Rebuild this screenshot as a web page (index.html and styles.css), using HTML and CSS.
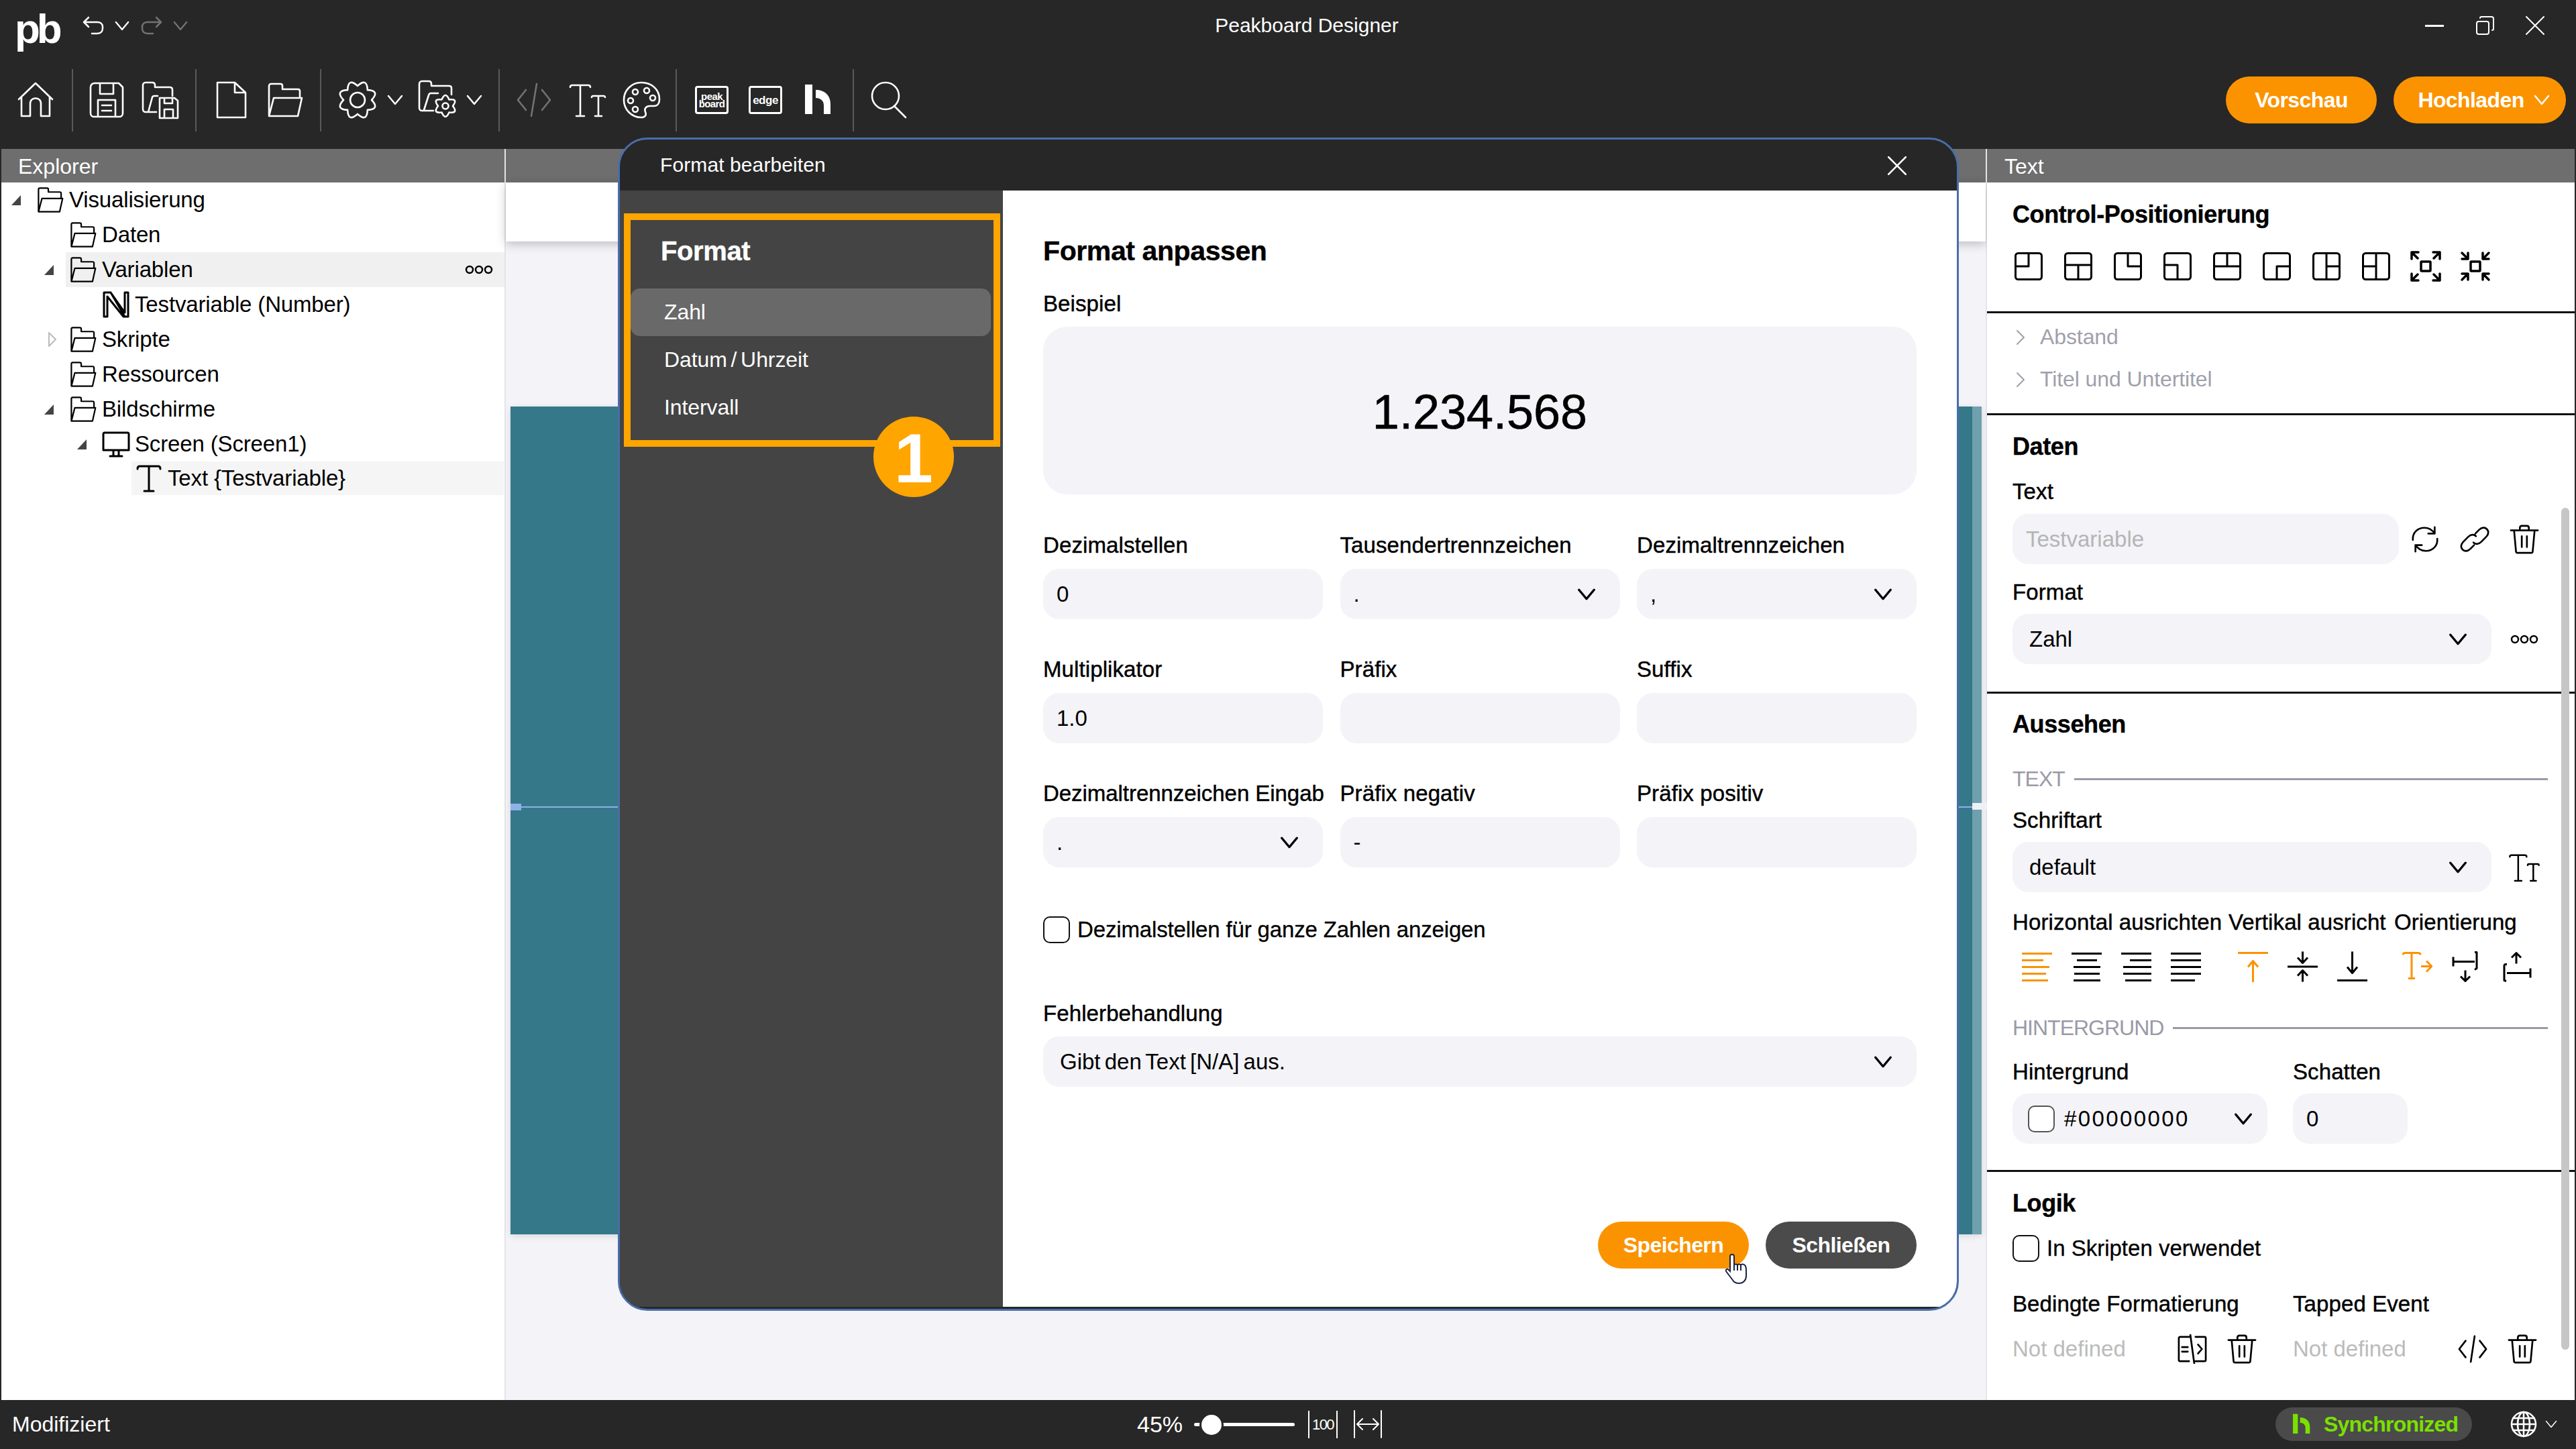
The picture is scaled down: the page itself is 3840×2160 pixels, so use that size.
FILE: index.html
```html
<!DOCTYPE html>
<html lang="de">
<head>
<meta charset="utf-8">
<title>Peakboard Designer</title>
<link rel="stylesheet" href="styles.css">
</head>
<body>
<svg class="defs" width="0" height="0">
  <defs>
    <symbol id="i-chev" viewBox="0 0 24 16"><path d="M2 2 12 14 22 2"/></symbol>
    <symbol id="i-home" viewBox="0 0 60 60"><path d="M5 29 30 5l25 24M9 26v28h13V35c0-10 16-10 16 0v19h13V26"/></symbol>
    <symbol id="i-save" viewBox="0 0 60 60"><path d="M12 5h36l6 6v39a5 5 0 0 1-5 5H11a5 5 0 0 1-5-5V11a6 6 0 0 1 6-6zM20 5v16h20V5M17 55V30h26v25M23 38h14M23 46h14"/></symbol>
    <symbol id="i-savefolder" viewBox="0 0 60 60"><path d="M24 48H8a4 4 0 0 1-4-4V8a4 4 0 0 1 4-4h10c3 0 4 2 4 4v3h22c3 0 4 2 4 4v9M12 48l6-22c.5-1.500 1-2 3-2h5"/><path d="M29 27h22l5 4v26H29zM36 27v8h12v-8M36 57V44h13v13"/></symbol>
    <symbol id="i-doc" viewBox="0 0 60 60"><path d="M9 4h26l16 15v37H9zM35 4v15h16"/></symbol>
    <symbol id="i-folder" viewBox="0 0 60 60"><path d="M6 54V9a3 3 0 0 1 3-3h14c2 0 3 1 3 3v5h23c2 0 3 1 3 3v10M6 54l7-27h42l-6 27z"/></symbol>
    <symbol id="i-gear" viewBox="0 0 60 60"><path d="M30 9Q44-3.800 44.850 15.150 63.800 16 51 30 63.800 44 44.850 44.850 44 63.800 30 51 16 63.800 15.150 44.850-3.800 44 9 30-3.800 16 15.150 15.150 16-3.800 30 9z"/><circle cx="30" cy="30" r="11"/></symbol>
    <symbol id="i-gearfolder" viewBox="0 0 60 60"><path d="M25 46H8a4 4 0 0 1-4-4V6a4 4 0 0 1 4-4h10c3 0 4 2 4 4v3h26c2 0 4 1 4 3v10M11 45l7-22c.5-2 1-3 3-3h11"/><path d="M48.500 29.500Q43 16.500 37.500 29.500 23.500 27.750 32 39 23.500 50.250 37.500 48.500 43 61.500 48.500 48.500 62.500 50.250 54 39 62.500 27.750 48.500 29.500z"/><circle cx="43" cy="39" r="4.500"/></symbol>
    <symbol id="i-code" viewBox="0 0 60 60"><path d="M18 15 6 30l12 15M42 15l12 15-12 15M34 6 26 54"/></symbol>
    <symbol id="i-tt" viewBox="0 0 60 60"><path d="M4 11c0-2 1-3 3-3h24c2 0 3 1 3 3M19 8v46M13 54h12M36 26c0-1 1-2 2-2h16c1 0 2 1 2 2M46 24v30M41 54h10"/></symbol>
    <symbol id="i-palette" viewBox="0 0 60 60"><path d="M30 4C15 4 4 16 4 30s11 26 26 26c6 0 8-4 6-8-2-5 1-9 7-9h6c5 0 8-4 8-10C57 14 45 4 30 4z"/><circle cx="21" cy="18" r="4"/><circle cx="38" cy="16" r="4"/><circle cx="14" cy="31" r="4"/><circle cx="47" cy="27" r="4"/><circle cx="21" cy="44" r="4"/></symbol>
    <symbol id="i-h" viewBox="0 0 60 60"><path class="solid" d="M9 7H20V51H9zM25 15C38 15 47 23 47 36V51H37V38C37 31 32 27 25 27z"/></symbol>
    <symbol id="i-search" viewBox="0 0 60 60"><circle cx="25" cy="24" r="20"/><path d="M38 39 55 56"/></symbol>
    <symbol id="i-dots" viewBox="0 0 42 14"><circle cx="7" cy="7" r="5"/><circle cx="21" cy="7" r="5"/><circle cx="35" cy="7" r="5"/></symbol>
    <symbol id="i-n" viewBox="0 0 44 44"><path d="M9 4h5l21 30V4h5v36h-7L9 10v30H4V4zM14 4l21 36"/></symbol>
    <symbol id="i-screen" viewBox="0 0 44 44"><path d="M5 5h34a2 2 0 0 1 2 2v24H3V7a2 2 0 0 1 2-2zM18 31v9M26 31v9M13 40h18"/></symbol>
    <symbol id="i-t" viewBox="0 0 44 44"><path d="M5 8c0-3 1-4 3-4h28c2 0 3 1 3 4M22 4v37M15 41h14"/></symbol>
    <symbol id="p1" viewBox="0 0 42 42"><rect x="1.500" y="1.500" width="39" height="39" rx="4"/><path d="M21 2v19H2"/></symbol>
    <symbol id="p2" viewBox="0 0 42 42"><rect x="1.500" y="1.500" width="39" height="39" rx="4"/><path d="M2 19h38M21 19v21"/></symbol>
    <symbol id="p3" viewBox="0 0 42 42"><rect x="1.500" y="1.500" width="39" height="39" rx="4"/><path d="M21 2v19h19"/></symbol>
    <symbol id="p4" viewBox="0 0 42 42"><rect x="1.500" y="1.500" width="39" height="39" rx="4"/><path d="M2 19h19v21"/></symbol>
    <symbol id="p5" viewBox="0 0 42 42"><rect x="1.500" y="1.500" width="39" height="39" rx="4"/><path d="M21 2v19M2 21h38"/></symbol>
    <symbol id="p6" viewBox="0 0 42 42"><rect x="1.500" y="1.500" width="39" height="39" rx="4"/><path d="M40 21H21v19"/></symbol>
    <symbol id="p7" viewBox="0 0 42 42"><rect x="1.500" y="1.500" width="39" height="39" rx="4"/><path d="M21 2v38M21 21h19"/></symbol>
    <symbol id="p8" viewBox="0 0 42 42"><rect x="1.500" y="1.500" width="39" height="39" rx="4"/><path d="M21 2v38M2 21h19"/></symbol>
    <symbol id="p9" viewBox="0 0 46 46"><rect x="16" y="16" width="14" height="14" rx="1"/><path d="M2 12V2h10M2 2l9 9M34 2h10v10M44 2l-9 9M2 34v10h10M2 44l9-9M44 34v10H34M44 44l-9-9"/></symbol>
    <symbol id="p10" viewBox="0 0 46 46"><rect x="16" y="16" width="14" height="14" rx="1"/><path d="M3 12h9V3M3 3l9 9M43 12h-9V3M43 3l-9 9M3 34h9v9M3 43l9-9M43 34h-9v9M43 43l-9-9"/></symbol>
    <symbol id="i-refresh" viewBox="0 0 46 46"><path d="M4 24C3 13 11 5 22 5c7 0 12 3 16 9M42 22c1 11-7 19-18 19-7 0-12-3-16-9M38 4v10H28M8 42V32h10"/></symbol>
    <symbol id="i-link" viewBox="0 0 46 46"><path d="M22 32l-6 6c-4 4-9 4-12 1s-3-8 1-12l8-8c4-4 9-4 12-1M24 14l6-6c4-4 9-4 12-1s3 8-1 12l-8 8c-4 4-9 4-12 1"/></symbol>
    <symbol id="i-trash" viewBox="0 0 46 46"><path d="M2 9h42M7 9l3 33c0 1 1 2 2 2h22c1 0 2-1 2-2l3-33M16 9V5c0-2 1-3 3-3h8c2 0 3 1 3 3v4M19 18v17M27 18v17"/></symbol>
    <symbol id="i-cond" viewBox="0 0 46 46"><path d="M18 4H4a2 2 0 0 0-2 2v34a2 2 0 0 0 2 2h14M28 4h14a2 2 0 0 1 2 2v34a2 2 0 0 1-2 2H28M20 1l6 44M7 20h9M7 27h9M32 16l6 7-6 7"/></symbol>
    <symbol id="i-code2" viewBox="0 0 46 46"><path d="M12 10 2 23l10 13M34 10l10 13-10 13M26 3 20 43"/></symbol>
    <symbol id="al-l" viewBox="0 0 45 45"><path d="M0 3h45M0 13h32M0 23h41M0 33h36M0 43h39"/></symbol>
    <symbol id="al-c" viewBox="0 0 45 45"><path d="M0 3h45M8 13h30M3 23h40M4 33h38M3 43h40"/></symbol>
    <symbol id="al-r" viewBox="0 0 45 45"><path d="M0 3h45M13 13h32M3 23h42M3 33h42M6 43h39"/></symbol>
    <symbol id="al-j" viewBox="0 0 45 45"><path d="M0 3h45M0 13h45M0 23h45M0 33h45M0 43h36"/></symbol>
    <symbol id="va-t" viewBox="0 0 45 45"><path class="thick" d="M0 2h45"/><path d="M22.500 46V14M15 23l7.500-9L30 23"/></symbol>
    <symbol id="va-m" viewBox="0 0 45 45"><path class="thick" d="M0 22.500h45"/><path d="M22.500 0v16M15 9l7.500 8L30 9M22.500 45V29M15 36l7.500-8L30 36"/></symbol>
    <symbol id="va-b" viewBox="0 0 45 45"><path class="thick" d="M0 43h45"/><path d="M22.500 0v32M15 23l7.500 9L30 23"/></symbol>
    <symbol id="or-a" viewBox="0 0 45 45"><path d="M1 5c0-2 1-3 3-3h20c2 0 3 1 3 3M14 2v38M9 40h10M28 22h15M36 14l8 8-8 8"/></symbol>
    <symbol id="or-b" viewBox="0 0 45 45"><path d="M2 14v-1M2 8v14M2 15h32M34 1h3v24l-3 2M20 28v16M13 37l7 7 7-7"/></symbol>
    <symbol id="or-c" viewBox="0 0 45 45"><path d="M43 25v14M8 32h35M8 19H6c-1 0-2 1-2 2v22l3 1M22 18V2M15 9l7-7 7 7"/></symbol>
    <symbol id="i-globe" viewBox="0 0 40 40"><circle cx="20" cy="20" r="18"/><ellipse cx="20" cy="20" rx="9" ry="18"/><path d="M20 2v36M4 11h32M2 20h36M4 29h32"/></symbol>
    <symbol id="i-fit" viewBox="0 0 44 42"><path d="M2 1v40M42 1v40M7 21h30M14 13l-8 8 8 8M30 13l8 8-8 8"/></symbol>
    <symbol id="i-x" viewBox="0 0 28 28"><path d="M1 1 27 27M27 1 1 27"/></symbol>
    <symbol id="i-restore" viewBox="0 0 28 28"><rect x="2" y="8" width="18" height="19" rx="3"/><path d="M7 3c0-1 1-2 2-2h15c2 0 3 1 3 3v15c0 1-1 2-2 2"/></symbol>
    <symbol id="i-undo" viewBox="0 0 32 28"><path d="M2 9h20c5 0 8 3 8 7v2c0 5-3 8-8 8h-8M9 2 2 9l7 7"/></symbol>
    <symbol id="i-redo" viewBox="0 0 32 28"><path d="M30 9H10c-5 0-8 3-8 7v2c0 5 3 8 8 8h8M23 2l7 7-7 7"/></symbol>
    <symbol id="i-tri-open" viewBox="0 0 12 22"><path d="M1 1l10 10L1 21z"/></symbol>
  </defs>
</svg>

<div class="app">
  <header class="titlebar">
    <div class="title-left">
      <span class="logo">pb</span>
      <svg class="ico undo"><use href="#i-undo"/></svg>
      <svg class="ico chev-s"><use href="#i-chev"/></svg>
      <svg class="ico undo dim"><use href="#i-redo"/></svg>
      <svg class="ico chev-s dim"><use href="#i-chev"/></svg>
    </div>
    <div class="app-title">Peakboard Designer</div>
    <div class="win-controls">
      <span class="win-min"></span>
      <svg class="ico win-btn"><use href="#i-restore"/></svg>
      <svg class="ico win-btn"><use href="#i-x"/></svg>
    </div>
  </header>

  <nav class="toolbar">
    <div class="tb-group g1"><svg class="ico tb"><use href="#i-home"/></svg></div>
    <div class="tb-group g2"><svg class="ico tb"><use href="#i-save"/></svg><svg class="ico tb"><use href="#i-savefolder"/></svg></div>
    <div class="tb-group g3"><svg class="ico tb"><use href="#i-doc"/></svg><svg class="ico tb"><use href="#i-folder"/></svg></div>
    <div class="tb-group g4"><svg class="ico tb"><use href="#i-gear"/></svg><svg class="ico tb-chev"><use href="#i-chev"/></svg><svg class="ico tb"><use href="#i-gearfolder"/></svg><svg class="ico tb-chev"><use href="#i-chev"/></svg></div>
    <div class="tb-group g5"><svg class="ico tb dim"><use href="#i-code"/></svg><svg class="ico tb"><use href="#i-tt"/></svg><svg class="ico tb"><use href="#i-palette"/></svg></div>
    <div class="tb-group g6">
      <span class="brand-box"><span>peak</span><span>board</span></span>
      <span class="brand-box"><span class="brand-edge">edge</span></span>
      <svg class="ico tb fill"><use href="#i-h"/></svg>
    </div>
    <svg class="ico tb tb-search"><use href="#i-search"/></svg>
    <div class="tb-actions">
      <button class="pill pill-orange">Vorschau</button>
      <button class="pill pill-orange pill-upload">Hochladen<svg class="ico pill-chev"><use href="#i-chev"/></svg></button>
    </div>
  </nav>

  <div class="workspace">
    <aside class="explorer">
      <div class="panel-head">Explorer</div>
      <ul class="tree">
        <li class="row l0"><span class="arrow"><i class="tri"></i></span><span class="node"><svg class="ico node-ico"><use href="#i-folder"/></svg>Visualisierung</span></li>
        <li class="row l1"><span class="arrow"></span><span class="node"><svg class="ico node-ico"><use href="#i-folder"/></svg>Daten</span></li>
        <li class="row l1"><span class="arrow"><i class="tri"></i></span><span class="node node-hover"><svg class="ico node-ico"><use href="#i-folder"/></svg>Variablen<svg class="ico node-dots"><use href="#i-dots"/></svg></span></li>
        <li class="row l2"><span class="arrow"></span><span class="node"><svg class="ico node-ico"><use href="#i-n"/></svg>Testvariable (Number)</span></li>
        <li class="row l1"><span class="arrow"><svg class="ico tri-open"><use href="#i-tri-open"/></svg></span><span class="node"><svg class="ico node-ico"><use href="#i-folder"/></svg>Skripte</span></li>
        <li class="row l1"><span class="arrow"></span><span class="node"><svg class="ico node-ico"><use href="#i-folder"/></svg>Ressourcen</span></li>
        <li class="row l1"><span class="arrow"><i class="tri"></i></span><span class="node"><svg class="ico node-ico"><use href="#i-folder"/></svg>Bildschirme</span></li>
        <li class="row l2"><span class="arrow"><i class="tri"></i></span><span class="node"><svg class="ico node-ico"><use href="#i-screen"/></svg>Screen (Screen1)</span></li>
        <li class="row l3"><span class="arrow"></span><span class="node node-sel"><svg class="ico node-ico"><use href="#i-t"/></svg>Text {Testvariable}</span></li>
      </ul>
    </aside>

    <main class="center">
      <div class="panel-head"></div>
      <div class="ruler"></div>
      <div class="stage">
        <div class="artboard">
          <span class="sel-line"></span>
          <span class="sel-handle"></span>
          <span class="sel-handle-r"></span>
        </div>
      </div>
    </main>

    <aside class="props">
      <div class="panel-head panel-head-r">Text</div>
      <span class="scrollbar"></span>
      <section class="sec sec-pos">
        <h3 class="sec-title">Control-Positionierung</h3>
        <div class="pos-icons">
          <svg class="ico pos"><use href="#p1"/></svg><svg class="ico pos"><use href="#p2"/></svg><svg class="ico pos"><use href="#p3"/></svg><svg class="ico pos"><use href="#p4"/></svg><svg class="ico pos"><use href="#p5"/></svg><svg class="ico pos"><use href="#p6"/></svg><svg class="ico pos"><use href="#p7"/></svg><svg class="ico pos"><use href="#p8"/></svg><svg class="ico pos pos-a"><use href="#p9"/></svg><svg class="ico pos pos-a"><use href="#p10"/></svg>
        </div>
      </section>
      <section class="sec sec-collapsed">
        <div class="coll"><svg class="ico coll-chev" viewBox="0 0 14 24"><path d="M2 2l10 10L2 22"/></svg>Abstand</div>
        <div class="coll"><svg class="ico coll-chev" viewBox="0 0 14 24"><path d="M2 2l10 10L2 22"/></svg>Titel und Untertitel</div>
      </section>
      <section class="sec sec-daten">
        <h3 class="sec-title">Daten</h3>
        <div class="lbl lbl-first">Text</div>
        <div class="ctl-row">
          <div class="ctl ctl-text ph">Testvariable</div>
          <svg class="ico act act-first"><use href="#i-refresh"/></svg>
          <svg class="ico act"><use href="#i-link"/></svg>
          <svg class="ico act"><use href="#i-trash"/></svg>
        </div>
        <div class="lbl lbl-next">Format</div>
        <div class="ctl-row">
          <div class="ctl ctl-wide">Zahl<svg class="ico ctl-chev"><use href="#i-chev"/></svg></div>
          <svg class="ico act-dots"><use href="#i-dots"/></svg>
        </div>
      </section>
      <section class="sec sec-look">
        <h3 class="sec-title">Aussehen</h3>
        <div class="legend legend-first">TEXT</div>
        <div class="lbl lbl-font">Schriftart</div>
        <div class="ctl-row">
          <div class="ctl ctl-wide">default<svg class="ico ctl-chev"><use href="#i-chev"/></svg></div>
          <svg class="ico font-ico"><use href="#i-tt"/></svg>
        </div>
        <div class="lbl-row">
          <span class="lbl lbl-h">Horizontal ausrichten</span>
          <span class="lbl lbl-v">Vertikal ausricht</span>
          <span class="lbl">Orientierung</span>
        </div>
        <div class="align-row">
          <svg class="ico alg on"><use href="#al-l"/></svg><svg class="ico alg"><use href="#al-c"/></svg><svg class="ico alg"><use href="#al-r"/></svg><svg class="ico alg"><use href="#al-j"/></svg>
          <svg class="ico alg on split"><use href="#va-t"/></svg><svg class="ico alg"><use href="#va-m"/></svg><svg class="ico alg"><use href="#va-b"/></svg>
          <svg class="ico alg on split2"><use href="#or-a"/></svg><svg class="ico alg"><use href="#or-b"/></svg><svg class="ico alg"><use href="#or-c"/></svg>
        </div>
        <div class="legend legend-bg">HINTERGRUND</div>
        <div class="bg-grid">
          <div>
            <div class="lbl">Hintergrund</div>
            <div class="ctl ctl-color"><span class="swatch"></span><span class="hex">#00000000</span><svg class="ico ctl-chev"><use href="#i-chev"/></svg></div>
          </div>
          <div>
            <div class="lbl">Schatten</div>
            <div class="ctl ctl-num">0</div>
          </div>
        </div>
      </section>
      <section class="sec sec-logic">
        <h3 class="sec-title">Logik</h3>
        <label class="check check-logic"><span class="box"></span>In Skripten verwendet</label>
        <div class="logic-grid">
          <div>
            <div class="lbl">Bedingte Formatierung</div>
            <div class="logic-row"><span class="nd">Not defined</span><svg class="ico act"><use href="#i-cond"/></svg><svg class="ico act"><use href="#i-trash"/></svg></div>
          </div>
          <div>
            <div class="lbl">Tapped Event</div>
            <div class="logic-row"><span class="nd">Not defined</span><svg class="ico act"><use href="#i-code2"/></svg><svg class="ico act"><use href="#i-trash"/></svg></div>
          </div>
        </div>
      </section>
    </aside>
  </div>

  <footer class="statusbar">
    <span class="st-left">Modifiziert</span>
    <div class="zoom">
      <span class="zoom-pct">45%</span>
      <span class="slider"><i class="thumb"></i></span>
      <span class="z100">100</span>
      <svg class="ico zfit"><use href="#i-fit"/></svg>
    </div>
    <div class="st-right">
      <span class="sync"><svg class="ico sync-h"><use href="#i-h"/></svg>Synchronized</span>
      <svg class="ico globe"><use href="#i-globe"/></svg>
      <svg class="ico globe-chev"><use href="#i-chev"/></svg>
    </div>
  </footer>

  <div class="dialog">
    <div class="dlg-title">Format bearbeiten<svg class="ico dlg-x"><use href="#i-x"/></svg></div>
    <div class="dlg-body">
      <div class="dlg-side">
        <div class="side-title">Format</div>
        <div class="side-item active">Zahl</div>
        <div class="side-item">Datum / Uhrzeit</div>
        <div class="side-item">Intervall</div>
      </div>
      <div class="dlg-main">
        <h2 class="main-title">Format anpassen</h2>
        <div class="lbl lbl-ex">Beispiel</div>
        <div class="example">1.234.568</div>
        <div class="form-grid">
          <div><div class="lbl">Dezimalstellen</div><div class="ctl">0</div></div>
          <div><div class="lbl">Tausendertrennzeichen</div><div class="ctl">.<svg class="ico ctl-chev"><use href="#i-chev"/></svg></div></div>
          <div><div class="lbl">Dezimaltrennzeichen</div><div class="ctl">,<svg class="ico ctl-chev"><use href="#i-chev"/></svg></div></div>
          <div><div class="lbl">Multiplikator</div><div class="ctl">1.0</div></div>
          <div><div class="lbl">Präfix</div><div class="ctl"></div></div>
          <div><div class="lbl">Suffix</div><div class="ctl"></div></div>
          <div><div class="lbl lbl-tight">Dezimaltrennzeichen Eingab</div><div class="ctl">.<svg class="ico ctl-chev"><use href="#i-chev"/></svg></div></div>
          <div><div class="lbl">Präfix negativ</div><div class="ctl">-</div></div>
          <div><div class="lbl">Präfix positiv</div><div class="ctl"></div></div>
        </div>
        <label class="check check-main"><span class="box"></span>Dezimalstellen für ganze Zahlen anzeigen</label>
        <div class="lbl lbl-err">Fehlerbehandlung</div>
        <div class="ctl">Gibt den Text [N/A] aus.<svg class="ico ctl-chev"><use href="#i-chev"/></svg></div>
        <div class="dlg-actions">
          <button class="pill pill-orange pill-dlg">Speichern</button>
          <button class="pill pill-dark pill-dlg">Schließen</button>
        </div>
      </div>
    </div>
    <div class="callout"></div>
    <div class="badge">1</div>
    <svg class="cursor" viewBox="0 0 34 46"><path d="M11 2c2 0 3 1 3 3v13c1-2 4-2 5 0 1-2 4-2 5 0 1-2 4-2 6 0 2 2 2 4 2 8v8c0 6-4 11-11 11-6 0-8-3-10-6L2 27c-1-2 1-4 3-3l3 3V5c0-2 1-3 3-3z"/><path d="M14 18v8M19 18v8M24 18v8"/></svg>
  </div>
</div>
</body>
</html>
```
FILE: styles.css
```css
* { box-sizing: border-box; }
html, body { margin: 0; padding: 0; }
body {
  width: 3840px;
  height: 2160px;
  overflow: hidden;
  background: #272727;
  font-family: "Liberation Sans", Arial, sans-serif;
  font-size: 32px;
  color: #000;
}
.defs { position: absolute; }
.ico { display: block; fill: none; stroke: currentColor; stroke-width: 3; stroke-linecap: round; stroke-linejoin: round; flex: none; overflow: visible; }
.solid { fill: currentColor; stroke: none; }
.dim { opacity: .35; }
ul { list-style: none; margin: 0; padding: 0; }
h2, h3 { margin: 0; }
button { font-family: inherit; border: 0; }

.app { position: relative; width: 3840px; height: 2160px; display: flex; flex-direction: column; padding: 0 2px 1px; background: #272727; color: #fff; }

/* title bar */
.titlebar { height: 76px; display: grid; grid-template-columns: 1fr auto 1fr; align-items: center; flex: none; }
.title-left { display: flex; align-items: center; padding-left: 20px; }
.logo { font-size: 62px; font-weight: 700; letter-spacing: -5px; line-height: 56px; width: 101px; margin-top: 10px; }
.undo { width: 32px; height: 28px; stroke-width: 2.500; }
.chev-s { width: 22px; height: 15px; margin: 0 17px 0 16px; stroke-width: 2.500; }
.app-title { font-size: 30px; padding-left: 56px; }
.win-controls { display: flex; align-items: center; justify-content: flex-end; gap: 47px; padding-right: 45px; }
.win-min { width: 28px; height: 3px; background: #fff; }
.win-btn { width: 28px; height: 28px; stroke-width: 2; }

/* toolbar */
.toolbar { height: 146px; display: flex; align-items: center; flex: none; margin-left: -2px; }
.tb-group { display: flex; align-items: center; gap: 20px; height: 93px; border-right: 2px solid #5a5a5a; }
.g1 { padding: 0 24px 0 23px; }
.g2 { padding: 0 22px 0 20px; }
.g3 { padding: 0 22px; }
.g4 { padding: 0 24px; }
.g5 { padding: 0 21px; }
.g6 { padding: 0 20px 0 22px; }
.tb { width: 60px; height: 60px; stroke-width: 2.600; }
.tb-chev { width: 24px; height: 16px; margin: 0 0 0 -6px; stroke-width: 2.500; }
.tb-search { margin-left: 22px; }
.fill { color: #fff; }
.brand-box { width: 50px; height: 42px; margin: 0 5px; display: flex; flex-direction: column; align-items: center; justify-content: center; border: 3px solid #fff; border-radius: 4px; font-size: 15px; font-weight: 700; line-height: 11px; letter-spacing: -.6px; }
.brand-edge { font-size: 17px; letter-spacing: -.5px; }
.tb-actions { margin-left: auto; display: flex; gap: 25px; padding-right: 13px; }
.pill { height: 70px; border-radius: 35px; color: #fff; font-size: 32px; font-weight: 700; padding: 0; display: flex; align-items: center; justify-content: center; letter-spacing: -.6px; }
.pill-orange { background: #fb9300; width: 225px; }
.pill-dark { background: #4b4b4b; }
.pill-upload { width: 257px; gap: 14px; padding-left: 12px; }
.pill-chev { width: 24px; height: 16px; stroke-width: 2.500; }
.pill-dlg { width: 225px; }

/* workspace */
.workspace { flex: 1; display: flex; min-height: 0; }
.panel-head { height: 50px; background: #6e6e6e; color: #fff; font-size: 32px; line-height: 52px; padding-left: 25px; flex: none; }
.explorer { width: 750px; background: #fff; color: #000; display: flex; flex-direction: column; flex: none; }
.row { display: flex; align-items: stretch; height: 52px; font-size: 33px; letter-spacing: -.15px; }
.l0 { padding-left: 13px; }
.l1 { padding-left: 62px; }
.l2 { padding-left: 111px; }
.l3 { padding-left: 160px; }
.arrow { width: 34px; display: flex; align-items: center; padding-left: 2px; }
.tri { display: block; width: 0; height: 0; border-left: 14px solid transparent; border-bottom: 15px solid #444; }
.tri-open { width: 12px; height: 22px; margin-left: 6px; color: #bbb; stroke-width: 2; }
.node { flex: 1; display: flex; align-items: center; gap: 6px; padding-left: 4px; white-space: nowrap; }
.node-ico { width: 44px; height: 44px; stroke-width: 3; }
.node-hover { background: #f0f0f0; }
.node-sel { background: #f5f5f5; height: 50px; margin-right: 1px; }
.node-dots { width: 42px; height: 14px; margin-left: auto; margin-right: 17px; stroke-width: 2.500; }

.center { flex: 1; display: flex; flex-direction: column; background: #f3f3f8; border-left: 2px solid #e4e4ea; border-right: 2px solid #e4e4ea; min-width: 0; }
.ruler { height: 88px; background: #fff; box-shadow: 0 4px 14px rgba(0, 0, 0, .22); flex: none; position: relative; }
.stage { flex: 1; padding: 246px 6px 0 7px; }
.artboard { position: relative; height: 1234px; background: linear-gradient(90deg, #35788a 0, #35788a 2179px, #6fa0ad 2179px); box-shadow: 0 2px 10px rgba(0, 0, 0, .12); }
.sel-line { position: absolute; left: 0; right: 0; top: 596px; height: 2px; background: #8fb0e8; }
.sel-handle { position: absolute; left: 0; top: 592px; width: 16px; height: 10px; background: #8fb0e8; }
.sel-handle-r { position: absolute; right: -8px; top: 591px; width: 22px; height: 10px; background: #eef0f4; }

/* properties */
.props { position: relative; width: 876px; background: #fff; color: #000; flex: none; display: flex; flex-direction: column; }
.panel-head-r { padding-left: 26px; }
.scrollbar { position: absolute; left: 856px; top: 535px; width: 12px; height: 1255px; border-radius: 6px; background: #c6c6c6; }
.sec { padding: 0 0 0 38px; border-bottom: 3px solid #111; }
.sec:last-child { border-bottom: 0; flex: 1; }
.sec-title { font-size: 36px; line-height: 40px; font-weight: 700; letter-spacing: -.4px; -webkit-text-stroke: .4px #000; }
.sec-pos { height: 195px; padding-top: 28px; }
.pos-icons { display: flex; gap: 32px; margin-top: 36px; padding-left: 3px; }
.pos { width: 42px; height: 42px; stroke-width: 3; }
.pos-a { width: 46px; height: 46px; margin: -2px -2px 0 -2px; stroke-width: 3.500; }
.sec-collapsed { height: 152px; padding-top: 4px; }
.coll { height: 63px; display: flex; align-items: center; color: #a0a0ac; font-size: 32px; letter-spacing: -.1px; }
.coll-chev { width: 14px; height: 24px; margin: 0 22px 0 5px; stroke-width: 2; }
.sec-daten { height: 415px; padding-top: 27px; }
.lbl { font-size: 33px; line-height: 36px; letter-spacing: .1px; white-space: nowrap; -webkit-text-stroke: .45px #000; }
.lbl-tight { letter-spacing: -.05px; }
.lbl-first { margin-top: 29px; margin-bottom: 15px; }
.lbl-next { margin-top: 24px; margin-bottom: 14px; }
.lbl-font { margin-top: 26px; margin-bottom: 14px; }
.ctl { position: relative; height: 75px; margin-top: 17px; padding-left: 20px; display: flex; align-items: center; background: #f3f3f8; border-radius: 24px; font-size: 33px; word-spacing: -3px; }
.ctl-row { display: flex; align-items: center; }
.ctl-row .ctl { margin-top: 0; }
.ctl-text { width: 576px; }
.ph { color: #b5b5b5; }
.ctl-wide { width: 714px; padding-left: 25px; }
.ctl-chev { position: absolute; right: 36px; top: 29px; width: 28px; height: 18px; stroke-width: 3; }
.act { width: 44px; height: 44px; margin-left: 30px; stroke-width: 2.800; }
.act-first { margin-left: 17px; }
.act-dots { width: 42px; height: 14px; margin-left: 28px; stroke-width: 2.500; }
.font-ico { width: 50px; height: 50px; margin-left: 24px; }

.sec-look { height: 713px; padding-top: 26px; padding-right: 40px; }
.legend { display: flex; align-items: center; gap: 14px; line-height: 36px; font-size: 32px; color: #9a9aa8; letter-spacing: -1px; }
.legend::after { content: ""; flex: 1; height: 3px; background: #9a9aa8; }
.legend-first { margin-top: 43px; }
.lbl-row { display: flex; margin-top: 27px; }
.lbl-h { width: 322px; }
.lbl-v { width: 247px; }
.align-row { display: flex; gap: 29px; margin-top: 25px; padding-left: 14px; }
.alg { width: 45px; height: 46px; stroke-width: 3; stroke-linecap: butt; }
.alg .thick { stroke-width: 4; }
.on { color: #fb9300; }
.split { margin-left: 26px; }
.split2 { margin-left: 23px; }
.legend-bg { margin-top: 50px; }
.bg-grid { display: grid; grid-template-columns: 380px 171px; gap: 38px; margin-top: 30px; }
.bg-grid .ctl { margin-top: 14px; }
.ctl-color { padding-left: 23px; gap: 14px; }
.ctl-color .ctl-chev { right: 22px; }
.hex { letter-spacing: 2.400px; }
.swatch { width: 40px; height: 40px; background: #fff; border: 2.500px solid #555; border-radius: 10px; }
.sec-logic { padding-top: 27px; }
.check { display: flex; align-items: center; gap: 11px; font-size: 33px; -webkit-text-stroke: .3px #000; }
.box { width: 40px; height: 40px; border: 2.500px solid #111; border-radius: 10px; background: #fff; flex: none; }
.check-logic { margin-top: 27px; }
.logic-grid { display: grid; grid-template-columns: 364px 364px; gap: 54px; margin-top: 45px; }
.logic-row { display: flex; align-items: center; margin-top: 26px; height: 46px; }
.logic-row .act:first-of-type { margin-left: auto; }
.nd { color: #bbb; font-size: 33px; }

/* status bar */
.statusbar { height: 72px; display: grid; grid-template-columns: 1fr auto 1fr; align-items: center; flex: none; font-size: 32px; }
.st-left { padding-left: 16px; }
.zoom { display: flex; align-items: center; margin-right: 84px; }
.zoom-pct { font-size: 34px; width: 85px; }
.slider { position: relative; width: 150px; height: 5px; background: #fff; border-radius: 3px; }
.thumb { position: absolute; left: 11px; top: -12px; width: 30px; height: 30px; border-radius: 50%; background: #fff; box-shadow: 0 0 0 3px #272727; }
.z100 { margin-left: 20px; width: 44px; height: 41px; border-left: 2px solid #fff; border-right: 2px solid #fff; font-size: 22px; line-height: 41px; text-align: center; letter-spacing: -1.500px; }
.zfit { width: 44px; height: 42px; margin-left: 23px; stroke-width: 2; }
.st-right { display: flex; align-items: center; justify-content: flex-end; padding-right: 26px; }
.sync { display: flex; align-items: center; height: 50px; width: 293px; padding-left: 20px; gap: 12px; border-radius: 25px; background: #4a4a4a; color: #7be000; font-size: 32px; font-weight: 700; letter-spacing: -.8px; }
.sync-h { width: 40px; height: 40px; stroke: none; }
.globe { width: 40px; height: 40px; margin-left: 57px; stroke-width: 2.500; }
.globe-chev { width: 18px; height: 12px; margin-left: 12px; stroke-width: 2; }

/* dialog */
.dialog { position: absolute; left: 921px; top: 205px; width: 1999px; height: 1749px; display: flex; flex-direction: column; border: 3px solid #4a6ea9; border-radius: 44px; background: #272727; overflow: hidden; padding: 0 3px 3px 0; }
.dlg-title { position: relative; height: 76px; display: flex; align-items: center; padding-left: 60px; font-size: 30px; color: #fff; flex: none; letter-spacing: .1px; }
.dlg-x { position: absolute; right: 72px; top: 25px; width: 28px; height: 28px; stroke-width: 2.500; }
.dlg-body { flex: 1; display: flex; min-height: 0; }
.dlg-side { width: 571px; background: #444; color: #fff; padding-top: 66px; flex: none; }
.side-title { font-size: 40px; line-height: 48px; font-weight: 700; padding-left: 61px; margin-bottom: 32px; letter-spacing: -.4px; -webkit-text-stroke: .4px #fff; }
.side-item { width: 537px; height: 71px; margin-left: 16px; padding-left: 50px; display: flex; align-items: center; font-size: 32px; border-radius: 14px; letter-spacing: -.1px; word-spacing: -3px; }
.side-item.active { background: #696969; }
.dlg-main { flex: 1; background: #fff; color: #000; padding: 68px 61px 0 60px; display: flex; flex-direction: column; }
.main-title { font-size: 41px; line-height: 44px; font-weight: 700; letter-spacing: -.4px; -webkit-text-stroke: .4px #000; }
.lbl-ex { margin-top: 39px; }
.example { height: 250px; margin-top: 16px; padding-top: 3px; border-radius: 36px; background: #f3f3f8; display: flex; align-items: center; justify-content: center; font-size: 72px; -webkit-text-stroke: .6px #000; }
.form-grid { display: grid; grid-template-columns: repeat(3, 417px); column-gap: 25.500px; row-gap: 57px; margin-top: 58px; }
.check-main { margin-top: 73px; letter-spacing: -.15px; }
.lbl-err { margin-top: 87px; }
.lbl-err + .ctl { margin-top: 16px; padding-left: 25px; }
.dlg-actions { display: flex; justify-content: flex-end; gap: 25px; margin-top: 201px; }
.callout { position: absolute; left: 6px; top: 110px; width: 561px; height: 348px; border: 10px solid #ffa500; pointer-events: none; }
.badge { position: absolute; left: 378px; top: 413px; width: 120px; height: 120px; border-radius: 50%; background: #ffa500; color: #fff; font-size: 104px; font-weight: 700; line-height: 124px; text-align: center; }
.cursor { position: absolute; left: 1647px; top: 1660px; width: 34px; height: 46px; fill: #fff; stroke: #1c2340; stroke-width: 2; }
```
